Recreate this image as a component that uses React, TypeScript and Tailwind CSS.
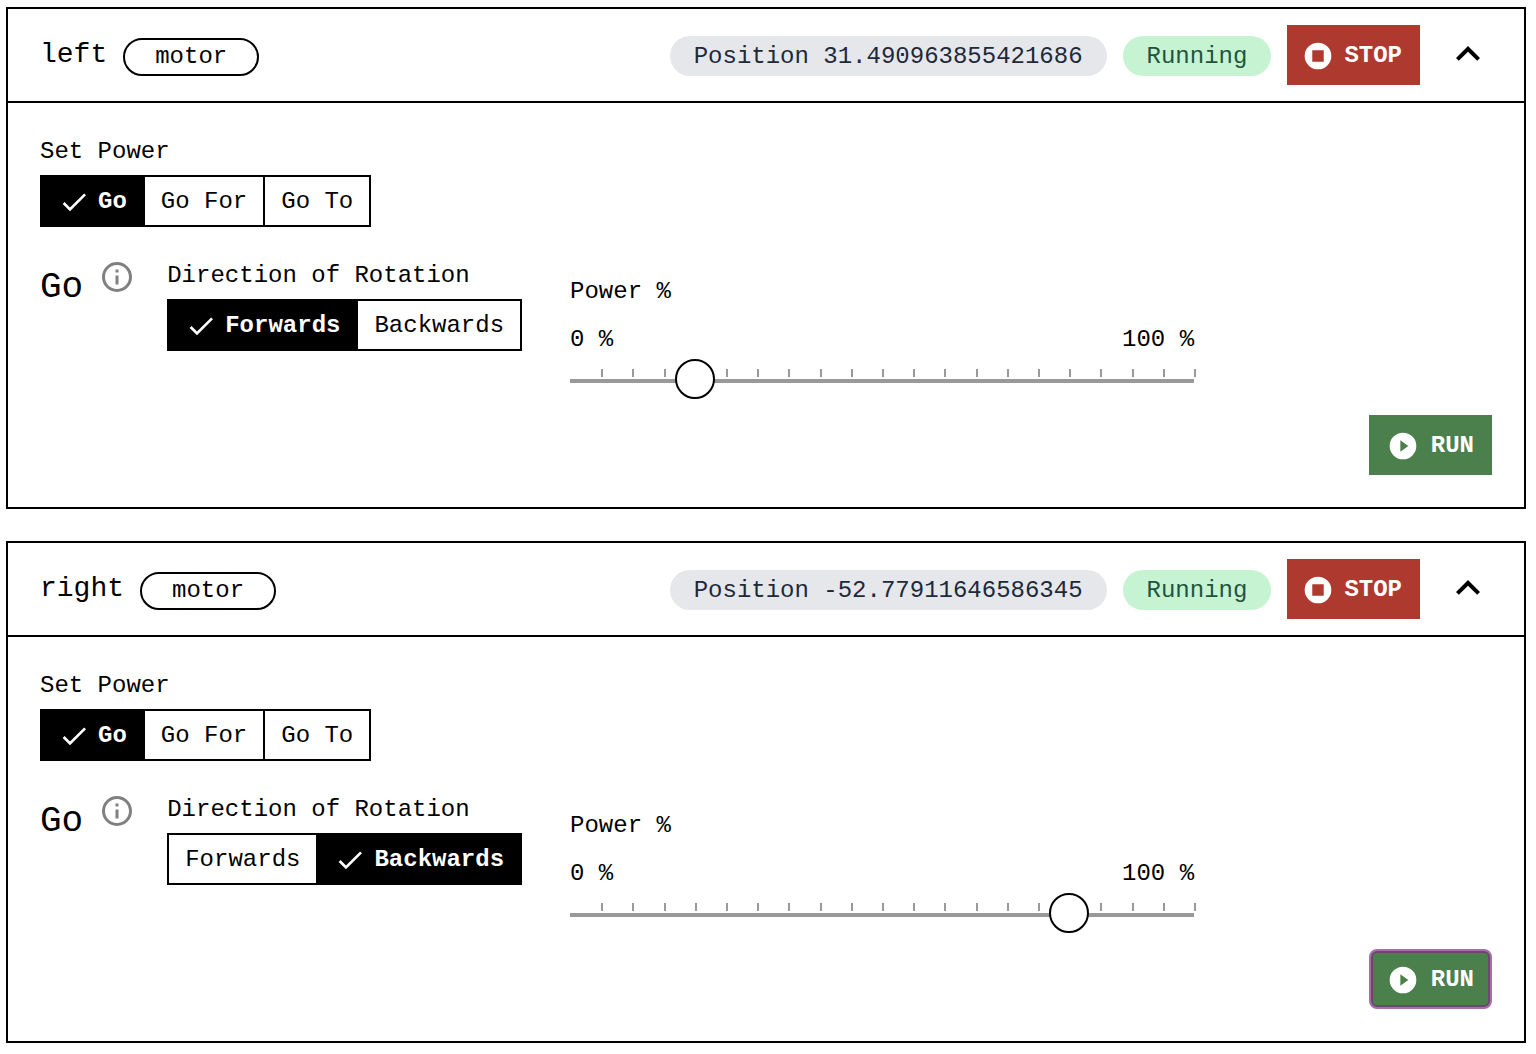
import { useId, useState } from "react";

type IconProps = { path: string; className?: string };

const CHECK = "M21,7L9,19L3.5,13.5L4.91,12.09L9,16.17L19.59,5.59L21,7Z";
const CHEVRON_UP = "M7.41,15.41L12,10.83L16.59,15.41L18,14L12,8L6,14L7.41,15.41Z";
const INFO =
  "M11,9H13V7H11M12,20C7.59,20 4,16.41 4,12C4,7.59 7.59,4 12,4C16.41,4 20,7.59 20,12C20,16.41 16.41,20 12,20M12,2A10,10 0 0,0 2,12A10,10 0 0,0 12,22A10,10 0 0,0 22,12A10,10 0 0,0 12,2M11,17H13V11H11V17Z";
const STOP =
  "M12,2A10,10 0 0,0 2,12A10,10 0 0,0 12,22A10,10 0 0,0 22,12A10,10 0 0,0 12,2M7.7,7.7H16.3V16.3H7.7Z";
const PLAY =
  "M12,2A10,10 0 0,0 2,12A10,10 0 0,0 12,22A10,10 0 0,0 22,12A10,10 0 0,0 12,2M10,16.4V7.6L16,12";

function Icon({ path, className }: IconProps) {
  return (
    <svg viewBox="0 0 24 24" fill="currentColor" fillRule="evenodd" aria-hidden="true" className={className}>
      <path d={path} />
    </svg>
  );
}

type SegmentedProps = {
  label: string;
  options: string[];
  value: string;
  onChange: (value: string) => void;
};

function Segmented({ label, options, value, onChange }: SegmentedProps) {
  const id = useId();
  return (
    <div className="flex flex-col items-start gap-1.5">
      <span id={id} className="leading-[34px]">
        {label}
      </span>
      <div role="group" aria-labelledby={id} className="flex border-l-2 border-black">
        {options.map((option) => {
          const selected = option === value;
          return (
            <button
              key={option}
              type="button"
              aria-pressed={selected}
              onClick={() => onChange(option)}
              className={
                selected
                  ? "flex h-[52px] items-center gap-2 border-y-2 border-r-2 border-black bg-black px-4 pt-0.5 font-bold text-white"
                  : "flex h-[52px] items-center border-y-2 border-r-2 border-black bg-white px-4 pt-0.5"
              }
            >
              {selected && <Icon path={CHECK} className="size-8" />}
              {option}
            </button>
          );
        })}
      </div>
    </div>
  );
}

const TICKS = Array.from({ length: 20 }, (_, i) => (i + 1) * 5);

function PowerSlider({ initial }: { initial: number }) {
  const id = useId();
  const [power, setPower] = useState(initial);
  return (
    <div className="max-w-[624px] flex-1 pt-4">
      <label htmlFor={id} className="block leading-[34px]">
        Power %
      </label>
      <div className="mt-3.5 flex justify-between leading-[34px]">
        <span>0 %</span>
        <span>100 %</span>
      </div>
      <div className="relative mt-0.5 h-10">
        {TICKS.map((tick) => (
          <span key={tick} className="absolute top-2.5 h-2 w-0.5 bg-[#999]" style={{ left: `${tick}%` }} />
        ))}
        <span className="absolute inset-x-0 top-5 h-1 bg-[#999]" />
        <input
          id={id}
          type="range"
          min={0}
          max={100}
          step={5}
          value={power}
          onChange={(e) => setPower(Number(e.target.value))}
          className="absolute -left-5 top-0 h-10 w-[calc(100%+40px)] cursor-pointer appearance-none bg-transparent outline-none [&::-webkit-slider-thumb]:size-10 [&::-webkit-slider-thumb]:appearance-none [&::-webkit-slider-thumb]:rounded-full [&::-webkit-slider-thumb]:border-2 [&::-webkit-slider-thumb]:border-black [&::-webkit-slider-thumb]:bg-white"
        />
      </div>
    </div>
  );
}

type MotorProps = {
  name: string;
  position: string;
  direction: string;
  power: number;
  highlighted?: boolean;
};

function MotorCard({ name, position, direction: initialDirection, power, highlighted }: MotorProps) {
  const [open, setOpen] = useState(true);
  const [mode, setMode] = useState("Go");
  const [direction, setDirection] = useState(initialDirection);
  return (
    <section className="border-2 border-black bg-white">
      <header className="flex items-center justify-between px-8 py-4">
        <div className="flex items-center gap-4">
          <h2 className="text-[28px] leading-[34px]">{name}</h2>
          <span className="mt-1 rounded-full border-2 border-black px-[30px] leading-[34px]">motor</span>
        </div>
        <div className="flex items-center gap-4">
          <span className="mt-0.5 rounded-full bg-gray-200 px-6 pt-0.5 leading-[38px] text-gray-800">
            Position {position}
          </span>
          <span className="mt-0.5 rounded-full bg-[#c6f4d3] px-6 pt-0.5 leading-[38px] text-[#22543d]">Running</span>
          <button
            type="button"
            className="flex h-[60px] items-center gap-2.5 bg-[#ae3a2f] pl-[15px] pr-[18px] pt-0.5 font-bold text-white"
          >
            <Icon path={STOP} className="size-8" />
            STOP
          </button>
          <button type="button" aria-label="Toggle details" onClick={() => setOpen(!open)} className="mb-0.5 ml-2">
            <Icon path={CHEVRON_UP} className="size-12" />
          </button>
        </div>
      </header>
      {open && (
        <div className="border-t-2 border-black p-8">
          <Segmented label="Set Power" options={["Go", "Go For", "Go To"]} value={mode} onChange={setMode} />
          <div className="mt-8 flex items-start">
            <h3 className="mr-4 pt-2 text-[36px] leading-[42px]">{mode}</h3>
            <button type="button" aria-label="About this mode" className="mr-8 text-[#808080]">
              <Icon path={INFO} className="size-9" />
            </button>
            <Segmented
              label="Direction of Rotation"
              options={["Forwards", "Backwards"]}
              value={direction}
              onChange={setDirection}
            />
            <div className="ml-12 flex flex-1">
              <PowerSlider initial={power} />
            </div>
          </div>
          <div className="mt-4 flex justify-end">
            <button
              type="button"
              className={
                highlighted
                  ? "flex h-[60px] items-center gap-3 rounded-lg border-2 border-[#a56fa8] bg-[#4b7f4c] px-4 pt-0.5 font-bold text-white inset-ring-2 inset-ring-[#6f4672]"
                  : "flex h-[60px] items-center gap-3 bg-[#4b7f4c] px-[18px] pt-0.5 font-bold text-white"
              }
            >
              <Icon path={PLAY} className="size-8" />
              RUN
            </button>
          </div>
        </div>
      )}
    </section>
  );
}

export default function App() {
  return (
    <main className="flex min-h-screen flex-col gap-8 bg-white pb-[11px] pl-1.5 pr-2.5 pt-[7px] font-['Liberation_Mono',monospace] text-2xl text-black">
      <MotorCard name="left" position="31.490963855421686" direction="Forwards" power={20} />
      <MotorCard name="right" position="-52.77911646586345" direction="Backwards" power={80} highlighted />
    </main>
  );
}
